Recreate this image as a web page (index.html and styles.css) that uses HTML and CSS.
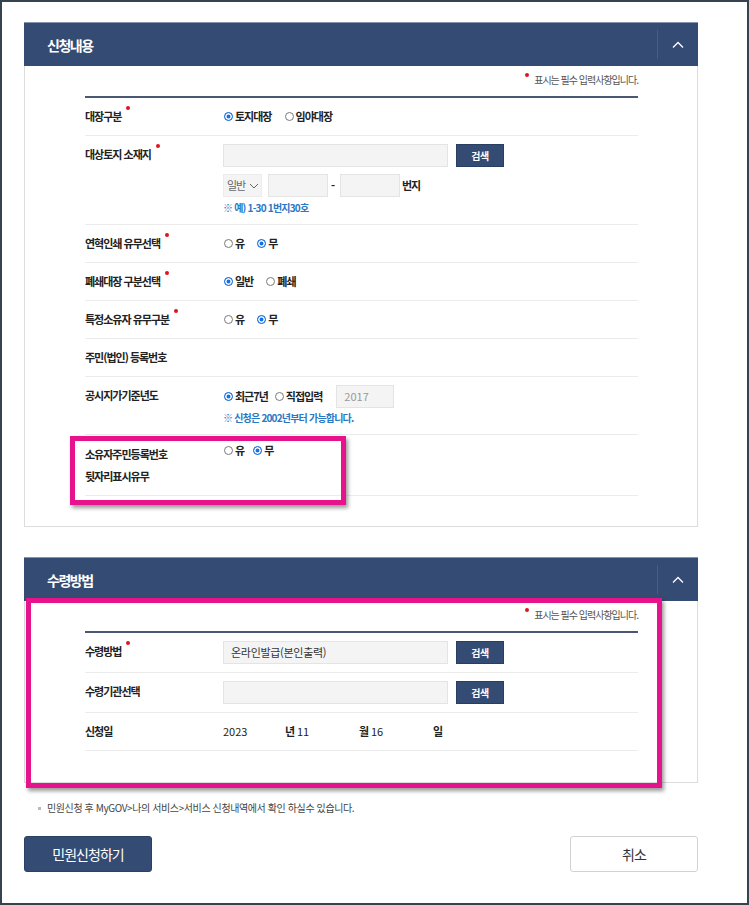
FILE: index.html
```html
<!DOCTYPE html>
<html lang="ko">

<head>
    <meta charset="UTF-8">
    <meta name="viewport" content="width=device-width, initial-scale=1.0">
    <title>민원신청</title>
    <link rel="stylesheet" href="styles.css">
</head>

<body>
    <div class="page">
        <section class="panel">
            <div class="panel-head">
                <h2>신청내용</h2>
                <button class="toggle" type="button">
                    <svg width="12" height="8" viewBox="0 0 12 8"><polyline points="1,6.5 6,1.5 11,6.5" fill="none" stroke="#fff" stroke-width="1.3"/></svg>
                </button>
            </div>
            <div class="panel-body">
                <p class="req-note"><span class="dot"></span>표시는 필수 입력사항입니다.</p>
                <div class="form">
                    <div class="row">
                        <div class="label req">대장구분</div>
                        <div class="value">
                            <span class="opt"><i class="radio on"></i>토지대장</span>
                            <span class="opt"><i class="radio"></i>임야대장</span>
                        </div>
                    </div>
                    <div class="row">
                        <div class="label req">대상토지 소재지</div>
                        <div class="value">
                            <div class="field-line">
                                <span class="input wide"></span>
                                <button class="btn-search" type="button">검색</button>
                            </div>
                            <div class="field-line second">
                                <span class="select">일반<svg width="10" height="6" viewBox="0 0 10 6"><polyline points="1,1 5,5 9,1" fill="none" stroke="#666" stroke-width="1"/></svg></span>
                                <span class="input small"></span>
                                <span class="dash">-</span>
                                <span class="input small"></span>
                                <span class="unit">번지</span>
                            </div>
                            <p class="hint">※ 예) 1-30 1번지30호</p>
                        </div>
                    </div>
                    <div class="row">
                        <div class="label req">연혁인쇄 유무선택</div>
                        <div class="value">
                            <span class="opt"><i class="radio"></i>유</span>
                            <span class="opt"><i class="radio on"></i>무</span>
                        </div>
                    </div>
                    <div class="row">
                        <div class="label req">폐쇄대장 구분선택</div>
                        <div class="value">
                            <span class="opt"><i class="radio on"></i>일반</span>
                            <span class="opt"><i class="radio"></i>폐쇄</span>
                        </div>
                    </div>
                    <div class="row">
                        <div class="label req">특정소유자 유무구분</div>
                        <div class="value">
                            <span class="opt"><i class="radio"></i>유</span>
                            <span class="opt"><i class="radio on"></i>무</span>
                        </div>
                    </div>
                    <div class="row">
                        <div class="label">주민(법인) 등록번호</div>
                        <div class="value"></div>
                    </div>
                    <div class="row">
                        <div class="label">공시지가기준년도</div>
                        <div class="value">
                            <div class="field-line">
                                <span class="opt tight"><i class="radio on"></i>최근7년</span>
                                <span class="opt tight"><i class="radio"></i>직접입력</span>
                                <span class="input year">2017</span>
                            </div>
                            <p class="hint close">※ 신청은 2002년부터 가능합니다.</p>
                        </div>
                    </div>
                    <div class="row tall">
                        <div class="label">소유자주민등록번호<br>뒷자리표시유무</div>
                        <div class="value top">
                            <span class="opt tight"><i class="radio"></i>유</span>
                            <span class="opt"><i class="radio on"></i>무</span>
                        </div>
                    </div>
                </div>
            </div>
        </section>

        <section class="panel second-panel">
            <div class="panel-head">
                <h2>수령방법</h2>
                <button class="toggle" type="button">
                    <svg width="12" height="8" viewBox="0 0 12 8"><polyline points="1,6.5 6,1.5 11,6.5" fill="none" stroke="#fff" stroke-width="1.3"/></svg>
                </button>
            </div>
            <div class="panel-body">
                <p class="req-note"><span class="dot"></span>표시는 필수 입력사항입니다.</p>
                <div class="form">
                    <div class="row">
                        <div class="label req">수령방법</div>
                        <div class="value">
                            <div class="field-line">
                                <span class="input wide filled">온라인발급(본인출력)</span>
                                <button class="btn-search" type="button">검색</button>
                            </div>
                        </div>
                    </div>
                    <div class="row">
                        <div class="label">수령기관선택</div>
                        <div class="value">
                            <div class="field-line">
                                <span class="input wide"></span>
                                <button class="btn-search" type="button">검색</button>
                            </div>
                        </div>
                    </div>
                    <div class="row">
                        <div class="label">신청일</div>
                        <div class="value date">
                            <span class="num">2023</span><b>년</b><span class="num">11</span><b>월</b><span class="num">16</span><b>일</b>
                        </div>
                    </div>
                </div>
            </div>
        </section>

        <p class="notice">민원신청 후 MyGOV&gt;나의 서비스&gt;서비스 신청내역에서 확인 하실수 있습니다.</p>

        <div class="actions">
            <button class="btn-submit" type="button">민원신청하기</button>
            <button class="btn-cancel" type="button">취소</button>
        </div>

        <div class="mark mark-owner"></div>
        <div class="mark mark-receive"></div>
    </div>
</body>

</html>
```

FILE: styles.css
```css
* {
    box-sizing: border-box;
    margin: 0;
    padding: 0;
}

body {
    font-family: "Noto Sans CJK KR", "Noto Sans", sans-serif;
    background-color: #fff;
    color: #222;
}

.page {
    position: relative;
    width: 749px;
    height: 905px;
    border: 2px solid #36434e;
    padding: 20px 49px 0 22px;
}

/* panels */
.panel {
    width: 674px;
}

.second-panel {
    margin-top: 30px;
}

.panel-head {
    height: 44px;
    background-color: #344b74;
    border-top: 1px solid #8593ad;
    display: flex;
    justify-content: space-between;
    align-items: center;
}

.panel-head h2 {
    font-size: 14px;
    font-weight: 700;
    color: #fff;
    letter-spacing: -1.5px;
    padding-left: 23px;
}

.toggle {
    width: 41px;
    height: 29px;
    background: none;
    border: none;
    border-left: 1px solid #475d84;
    display: flex;
    align-items: center;
    justify-content: center;
    padding-top: 1px;
}

.panel-body {
    border: 1px solid #ddd;
    border-top: none;
    padding: 6px 59px 30px 60px;
}

.second-panel .panel-body {
    padding-bottom: 31px;
}

.req-note {
    text-align: right;
    font-size: 10px;
    line-height: 16px;
    color: #555;
    letter-spacing: -1px;
}

.req-note .dot {
    display: inline-block;
    width: 4px;
    height: 4px;
    border-radius: 50%;
    background-color: #e0141e;
    vertical-align: top;
    margin: 1px 5px 0 0;
}

.form {
    margin-top: 8px;
    border-top: 2px solid #4a5874;
}

.row {
    display: grid;
    grid-template-columns: 138px 1fr;
    padding: 8px 0;
    border-bottom: 1px solid #ececec;
    line-height: 21px;
}

.row.tall .label {
    line-height: 22px;
}

.label {
    font-size: 11px;
    font-weight: 700;
    color: #222;
    letter-spacing: -1px;
}

.label.req::after {
    content: "";
    display: inline-block;
    width: 4px;
    height: 4px;
    border-radius: 50%;
    background-color: #e0141e;
    vertical-align: top;
    margin: 0 0 0 5px;
}

.value {
    font-size: 11px;
    font-weight: 700;
    letter-spacing: -1px;
}

.value.top {
    line-height: 15px;
}

.opt {
    display: inline-flex;
    align-items: center;
    margin-right: 10px;
}

.opt.tight {
    margin-right: 6px;
}

.radio {
    display: inline-block;
    width: 9px;
    height: 9px;
    border: 1px solid #7a7a7a;
    border-radius: 50%;
    background-color: #fff;
    margin: 0 2px 0 1px;
}

.radio.on {
    border-color: #1a6fe0;
    background-color: #1a6fe0;
    box-shadow: inset 0 0 0 1.5px #fff;
}

.field-line {
    display: flex;
    align-items: center;
    height: 23px;
}

.field-line.second {
    margin-top: 7px;
}

.input {
    display: inline-block;
    flex-shrink: 0;
    height: 23px;
    background-color: #f4f4f4;
    border: 1px solid #e4e4e4;
    font-size: 11px;
    font-weight: 400;
    line-height: 21px;
    letter-spacing: -0.3px;
    color: #333;
    padding-left: 7px;
}

.input.wide {
    width: 225px;
}

.input.small {
    width: 60px;
    margin-left: 6px;
}

.input.year {
    width: 58px;
    margin-left: 8px;
    color: #999;
    letter-spacing: 0;
}

.dash {
    width: 9px;
    margin-left: 3px;
    font-weight: 700;
}

.dash + .input.small {
    margin-left: 0;
}

.unit {
    margin-left: 2px;
}

.select {
    display: inline-flex;
    flex-shrink: 0;
    align-items: center;
    gap: 4px;
    width: 39px;
    height: 23px;
    white-space: nowrap;
    background-color: #f4f4f4;
    border: 1px solid #ececec;
    font-weight: 400;
    letter-spacing: -1px;
    color: #666;
    padding-left: 3px;
}

.select svg {
    flex-shrink: 0;
}

.btn-search {
    width: 48px;
    height: 23px;
    margin-left: 8px;
    background-color: #344b74;
    border: 1px solid #2a3e61;
    color: #fff;
    font-family: inherit;
    font-size: 10px;
    font-weight: 700;
    letter-spacing: -0.5px;
}

.hint {
    margin-top: 3px;
    font-size: 10px;
    line-height: 16px;
    color: #2a78c4;
    letter-spacing: -0.8px;
}

.hint.close {
    margin-top: 2px;
}

.date {
    font-weight: 400;
}

.date .num {
    display: inline-block;
    width: 62px;
    letter-spacing: 0;
}

.date b {
    display: inline-block;
    width: 12px;
}

/* bottom */
.notice {
    margin-top: 17px;
    padding-left: 23px;
    position: relative;
    font-size: 10px;
    line-height: 16px;
    color: #444;
    letter-spacing: -0.4px;
}

.notice::before {
    content: "";
    position: absolute;
    left: 14px;
    top: 7px;
    width: 3px;
    height: 3px;
    background-color: #bbb;
}

.actions {
    width: 674px;
    margin-top: 20px;
    display: flex;
    justify-content: space-between;
}

.btn-submit,
.btn-cancel {
    width: 128px;
    height: 36px;
    border-radius: 3px;
    font-family: inherit;
    font-size: 14px;
    letter-spacing: -1px;
}

.btn-submit {
    background-color: #344b74;
    border: 1px solid #2c4066;
    color: #fff;
}

.btn-cancel {
    background-color: #fff;
    border: 1px solid #d2d2d2;
    color: #333;
}

/* highlight annotations */
.mark {
    position: absolute;
    border: 5px solid #e6138c;
    box-shadow: 2px 3px 4px rgba(0, 0, 0, 0.4);
}

.mark-owner {
    left: 68px;
    top: 434px;
    width: 276px;
    height: 69px;
}

.mark-receive {
    left: 24px;
    top: 596px;
    width: 636px;
    height: 190px;
}
```
